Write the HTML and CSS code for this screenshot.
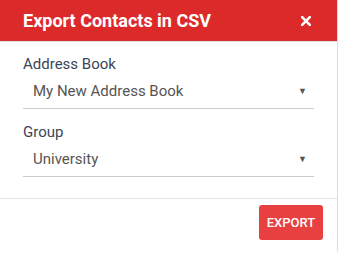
FILE: index.html
```html
<!DOCTYPE html>
<html>
<head>
<meta charset="utf-8">
<link rel="stylesheet" href="styles.css">
</head>
<body>
<div class="dialog">
  <div class="header">
    <span class="title">Export Contacts in CSV</span>
    <svg class="close" width="10" height="10" viewBox="0 0 10 10"><path d="M1.2 1.2 L8.8 8.8 M8.8 1.2 L1.2 8.8" stroke="#fff" stroke-width="2.6" stroke-linecap="square"/></svg>
  </div>
  <div class="body">
    <div class="field">
      <div class="label">Address Book</div>
      <div class="select"><span>My New Address Book</span><span class="arrow">&#9660;</span></div>
    </div>
    <div class="field">
      <div class="label">Group</div>
      <div class="select"><span>University</span><span class="arrow">&#9660;</span></div>
    </div>
  </div>
  <div class="footer">
    <button class="btn">EXPORT</button>
  </div>
</div>
</body>
</html>
```
FILE: styles.css
```css
html, body { margin: 0; padding: 0; background: #fff; }
body { font-family: Roboto, "Liberation Sans", sans-serif; }
.dialog {
  width: 338px;
  height: 253px;
  border-right: 1px solid #ddd;
  border-radius: 0 0 4px 4px;
  display: flex;
  flex-direction: column;
  box-sizing: border-box;
}
.header {
  height: 41px;
  background: #dc2a2a;
  border-bottom: 1px solid #e2e2e2;
  display: flex;
  align-items: center;
  justify-content: space-between;
  padding: 0 26px 0 23px;
  color: #fff;
}
.title { font-size: 18px; font-weight: 700; }
.close { display: block; margin-top: 1px; }
.body { padding: 12px 23px 0 23px; flex: 1; }
.field { margin-bottom: 13px; }
.label { font-size: 15px; color: #3b4557; line-height: 20px; }
.select {
  display: flex;
  justify-content: space-between;
  align-items: center;
  height: 35px;
  box-sizing: border-box;
  border-bottom: 1px solid #ccc;
  padding: 0 7px 0 10px;
  font-size: 15px;
  color: #555;
}
.arrow { font-size: 9px; color: #555; }
.footer {
  border-top: 1px solid #e3e3e3;
  height: 55px;
  box-sizing: border-box;
  display: flex;
  justify-content: flex-end;
  align-items: flex-start;
  padding: 6px 14px 0 0;
}
.btn {
  background: #e84040;
  color: #fff;
  border: none;
  border-radius: 3px;
  width: 64px;
  height: 35px;
  font-family: Roboto, "Liberation Sans", sans-serif;
  font-size: 13px;
  font-weight: 500;
  padding: 0;
}
```
